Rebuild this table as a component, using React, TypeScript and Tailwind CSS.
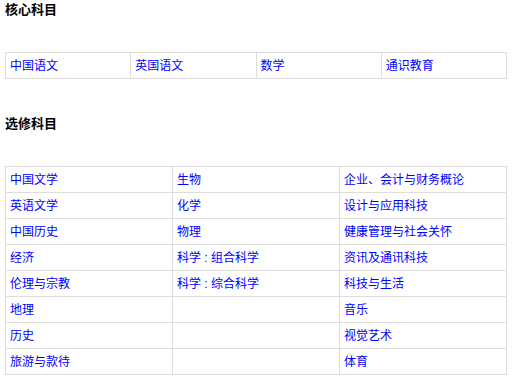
const CORE = ["中国语文", "英国语文", "数学", "通识教育"];

const ELECTIVE: string[][] = [
  ["中国文学", "生物", "企业、会计与财务概论"],
  ["英语文学", "化学", "设计与应用科技"],
  ["中国历史", "物理", "健康管理与社会关怀"],
  ["经济", "科学 : 组合科学", "资讯及通讯科技"],
  ["伦理与宗教", "科学 : 综合科学", "科技与生活"],
  ["地理", "", "音乐"],
  ["历史", "", "视觉艺术"],
  ["旅游与款待", "", "体育"],
];

function Cell({ text }: { text: string }) {
  return (
    <div className="h-[26px] border-r border-b border-[#dddddd] pl-1 flex items-center text-[12px] text-[#0000ff] whitespace-nowrap">
      {text}
    </div>
  );
}

export default function App() {
  return (
    <div
      className="bg-white w-[516px] h-[383px] pl-[5px] pt-[1px] text-black"
      style={{ fontFamily: '"Liberation Sans", "Noto Sans CJK SC", sans-serif' }}
    >
      <h3 className="text-[13px] font-semibold leading-[18px]">核心科目</h3>
      <div className="mt-[33px] w-[502px] grid grid-cols-4 border-l border-t border-[#dddddd]">
        {CORE.map((s) => (
          <Cell key={s} text={s} />
        ))}
      </div>
      <h3 className="mt-[36px] text-[13px] font-semibold leading-[18px]">选修科目</h3>
      <div className="mt-[33px] w-[502px] grid grid-cols-3 border-l border-t border-[#dddddd]">
        {ELECTIVE.flat().map((s, i) => (
          <Cell key={i} text={s} />
        ))}
      </div>
    </div>
  );
}
